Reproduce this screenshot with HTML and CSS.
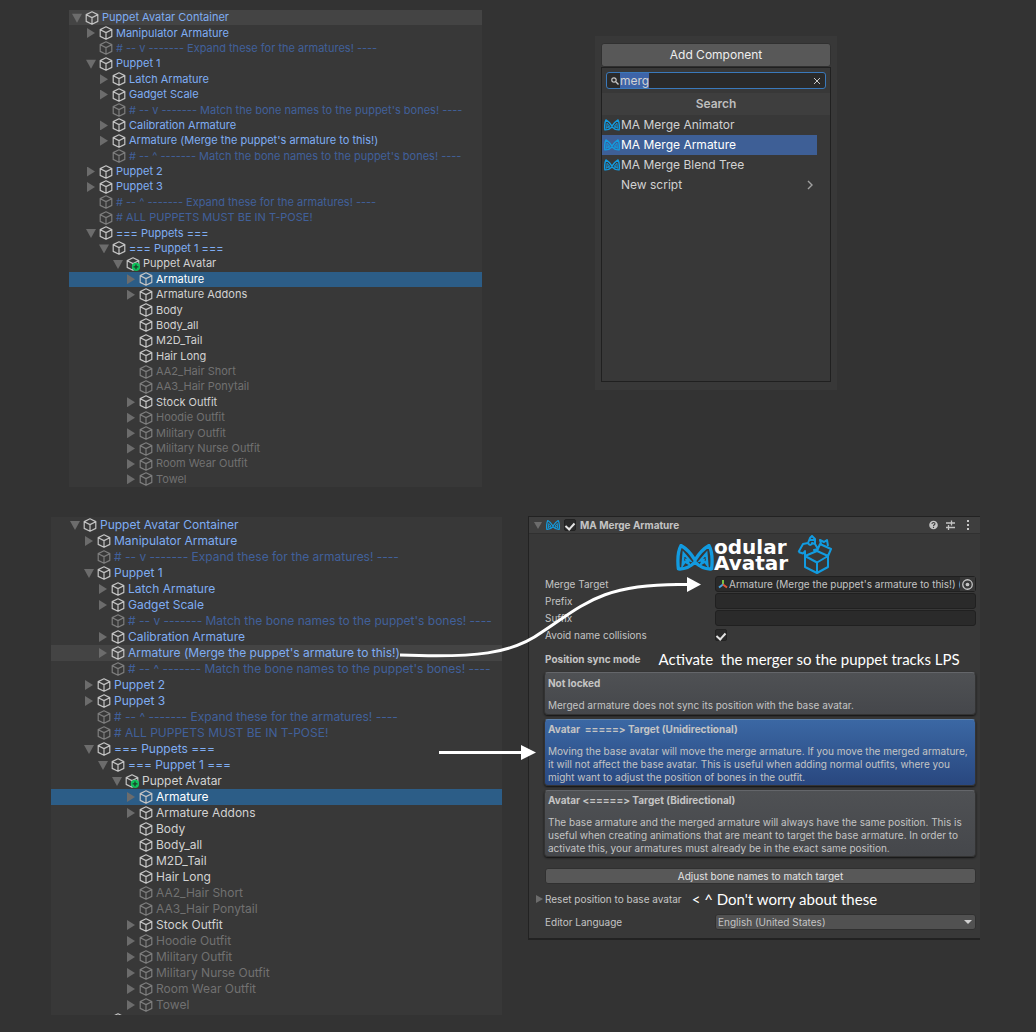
FILE: index.html
```html
<!DOCTYPE html>
<html lang="en">
<head>
<meta charset="utf-8">
<title>Puppet armature setup</title>
<link rel="stylesheet" href="styles.css">
</head>
<body>
<svg class="symbols" aria-hidden="true">
  <symbol id="cube" viewBox="0 0 14 14"><path d="M7 .8 12.8 3.6V10.4L7 13.3 1.2 10.4V3.6ZM1.2 3.8 7 6.6 12.8 3.8M7 6.6V13.2" fill="none" stroke="currentColor" stroke-width="1.2" stroke-linejoin="round"/></symbol>
  <symbol id="cube-added" viewBox="0 0 14 14"><path d="M7 .8 12.8 3.6V10.4L7 13.3 1.2 10.4V3.6ZM1.2 3.8 7 6.6 12.8 3.8M7 6.6V13.2" fill="none" stroke="currentColor" stroke-width="1.2" stroke-linejoin="round"/><circle cx="10" cy="9.800" r="4.100" fill="#0fc25b"/><path d="M10 7.400V12.200M7.600 9.800H12.400" stroke="#1c3a28" stroke-width="1.300"/></symbol>
  <symbol id="ears" viewBox="0 0 36 26"><path d="M2 24C1 15 1.500 7 4.500 1.500 9 4 14 9 18 15.500 22 9 27 4 31.500 1.500 34.500 7 35 15 34 24 27 24.500 22 21.500 18 17.500 14 21.500 9 24.500 2 24Z" fill="none" stroke="#129be0" stroke-width="3.200" stroke-linejoin="round"/><path d="M6 20.500 7 9 13 16 10 15.500 12 19 8.500 17ZM30 20.500 29 9 23 16 26 15.500 24 19 27.500 17Z" fill="none" stroke="#129be0" stroke-width="2.200"/></symbol>
</svg>
<main>
  <section class="step step-pick">
    <ul class="tree tree-compact">
      <li class="open prefab hover"><svg><use href="#cube"/></svg>Puppet Avatar Container</li>
      <li class="l1 closed prefab"><svg><use href="#cube"/></svg>Manipulator Armature</li>
      <li class="l1 prefab off"><svg><use href="#cube"/></svg># -- v ------- Expand these for the armatures! ----</li>
      <li class="l1 open prefab"><svg><use href="#cube"/></svg>Puppet 1</li>
      <li class="l2 closed prefab"><svg><use href="#cube"/></svg>Latch Armature</li>
      <li class="l2 closed prefab"><svg><use href="#cube"/></svg>Gadget Scale</li>
      <li class="l2 prefab off"><svg><use href="#cube"/></svg># -- v ------- Match the bone names to the puppet's bones! ----</li>
      <li class="l2 closed prefab"><svg><use href="#cube"/></svg>Calibration Armature</li>
      <li class="l2 closed prefab"><svg><use href="#cube"/></svg>Armature (Merge the puppet's armature to this!)</li>
      <li class="l2 prefab off"><svg><use href="#cube"/></svg># -- ^ ------- Match the bone names to the puppet's bones! ----</li>
      <li class="l1 closed prefab"><svg><use href="#cube"/></svg>Puppet 2</li>
      <li class="l1 closed prefab"><svg><use href="#cube"/></svg>Puppet 3</li>
      <li class="l1 prefab off"><svg><use href="#cube"/></svg># -- ^ ------- Expand these for the armatures! ----</li>
      <li class="l1 prefab off"><svg><use href="#cube"/></svg># ALL PUPPETS MUST BE IN T-POSE!</li>
      <li class="l1 open prefab"><svg><use href="#cube"/></svg>=== Puppets ===</li>
      <li class="l2 open prefab"><svg><use href="#cube"/></svg>=== Puppet 1 ===</li>
      <li class="l3 open"><svg><use href="#cube-added"/></svg>Puppet Avatar</li>
      <li class="l4 closed selected"><svg><use href="#cube"/></svg>Armature</li>
      <li class="l4 closed"><svg><use href="#cube"/></svg>Armature Addons</li>
      <li class="l4"><svg><use href="#cube"/></svg>Body</li>
      <li class="l4"><svg><use href="#cube"/></svg>Body_all</li>
      <li class="l4"><svg><use href="#cube"/></svg>M2D_Tail</li>
      <li class="l4"><svg><use href="#cube"/></svg>Hair Long</li>
      <li class="l4 off"><svg><use href="#cube"/></svg>AA2_Hair Short</li>
      <li class="l4 off"><svg><use href="#cube"/></svg>AA3_Hair Ponytail</li>
      <li class="l4 closed"><svg><use href="#cube"/></svg>Stock Outfit</li>
      <li class="l4 closed off"><svg><use href="#cube"/></svg>Hoodie Outfit</li>
      <li class="l4 closed off"><svg><use href="#cube"/></svg>Military Outfit</li>
      <li class="l4 closed off"><svg><use href="#cube"/></svg>Military Nurse Outfit</li>
      <li class="l4 closed off"><svg><use href="#cube"/></svg>Room Wear Outfit</li>
      <li class="l4 closed off"><svg><use href="#cube"/></svg>Towel</li>
    </ul>
    <div class="picker">
      <button type="button" class="picker-open">Add Component</button>
      <div class="picker-menu">
        <label class="search">
          <svg class="lens" viewBox="0 0 8 8"><circle cx="3" cy="3" r="2.200" fill="none" stroke="#c8c8c8" stroke-width="1.200"/><path d="M4.800 4.800 7.500 7.500" stroke="#c8c8c8" stroke-width="1.400"/></svg>
          <input type="text" id="component-search" aria-label="Search components" value="merg" autofocus>
          <svg class="clear" viewBox="0 0 8 8"><path d="M1 1 7 7M7 1 1 7" stroke="#c8c8c8"/></svg>
        </label>
        <h2>Search</h2>
        <ul class="results">
          <li><button type="button"><svg><use href="#ears"/></svg>MA Merge Animator</button></li>
          <li><button type="button" class="current"><svg><use href="#ears"/></svg>MA Merge Armature</button></li>
          <li><button type="button"><svg><use href="#ears"/></svg>MA Merge Blend Tree</button></li>
          <li><button type="button" class="more">New script<svg viewBox="0 0 8 10"><path d="M2 1 6 5 2 9" fill="none" stroke="#a0a0a0" stroke-width="1.400"/></svg></button></li>
        </ul>
      </div>
    </div>
  </section>

  <section class="step step-link">
    <ul class="tree">
      <li class="open prefab"><svg><use href="#cube"/></svg>Puppet Avatar Container</li>
      <li class="l1 closed prefab"><svg><use href="#cube"/></svg>Manipulator Armature</li>
      <li class="l1 prefab off"><svg><use href="#cube"/></svg># -- v ------- Expand these for the armatures! ----</li>
      <li class="l1 open prefab"><svg><use href="#cube"/></svg>Puppet 1</li>
      <li class="l2 closed prefab"><svg><use href="#cube"/></svg>Latch Armature</li>
      <li class="l2 closed prefab"><svg><use href="#cube"/></svg>Gadget Scale</li>
      <li class="l2 prefab off"><svg><use href="#cube"/></svg># -- v ------- Match the bone names to the puppet's bones! ----</li>
      <li class="l2 closed prefab"><svg><use href="#cube"/></svg>Calibration Armature</li>
      <li class="l2 closed prefab hover"><svg><use href="#cube"/></svg>Armature (Merge the puppet's armature to this!)</li>
      <li class="l2 prefab off"><svg><use href="#cube"/></svg># -- ^ ------- Match the bone names to the puppet's bones! ----</li>
      <li class="l1 closed prefab"><svg><use href="#cube"/></svg>Puppet 2</li>
      <li class="l1 closed prefab"><svg><use href="#cube"/></svg>Puppet 3</li>
      <li class="l1 prefab off"><svg><use href="#cube"/></svg># -- ^ ------- Expand these for the armatures! ----</li>
      <li class="l1 prefab off"><svg><use href="#cube"/></svg># ALL PUPPETS MUST BE IN T-POSE!</li>
      <li class="l1 open prefab"><svg><use href="#cube"/></svg>=== Puppets ===</li>
      <li class="l2 open prefab"><svg><use href="#cube"/></svg>=== Puppet 1 ===</li>
      <li class="l3 open"><svg><use href="#cube-added"/></svg>Puppet Avatar</li>
      <li class="l4 closed selected"><svg><use href="#cube"/></svg>Armature</li>
      <li class="l4 closed"><svg><use href="#cube"/></svg>Armature Addons</li>
      <li class="l4"><svg><use href="#cube"/></svg>Body</li>
      <li class="l4"><svg><use href="#cube"/></svg>Body_all</li>
      <li class="l4"><svg><use href="#cube"/></svg>M2D_Tail</li>
      <li class="l4"><svg><use href="#cube"/></svg>Hair Long</li>
      <li class="l4 off"><svg><use href="#cube"/></svg>AA2_Hair Short</li>
      <li class="l4 off"><svg><use href="#cube"/></svg>AA3_Hair Ponytail</li>
      <li class="l4 closed"><svg><use href="#cube"/></svg>Stock Outfit</li>
      <li class="l4 closed off"><svg><use href="#cube"/></svg>Hoodie Outfit</li>
      <li class="l4 closed off"><svg><use href="#cube"/></svg>Military Outfit</li>
      <li class="l4 closed off"><svg><use href="#cube"/></svg>Military Nurse Outfit</li>
      <li class="l4 closed off"><svg><use href="#cube"/></svg>Room Wear Outfit</li>
      <li class="l4 closed off"><svg><use href="#cube"/></svg>Towel</li>
      <li class="l2 cut" aria-hidden="true"><svg><use href="#cube"/></svg></li>
    </ul>

    <form class="inspector">
      <header>
        <span class="fold fold-open"></span>
        <svg class="ears"><use href="#ears"/></svg>
        <input type="checkbox" id="enabled" checked>
        <label for="enabled">MA Merge Armature</label>
        <svg class="tools" viewBox="0 0 44 12"><circle cx="5.500" cy="6" r="4.300" fill="#c4c4c4"/><path d="M4 4.900C4 3 7 3.200 7 4.800 7 5.800 5.500 5.800 5.500 7M5.500 7.800V8.900" stroke="#3c3c3c" stroke-width="1.100" fill="none"/><path d="M18 4H27M23.500 1.500V6.500M18 8.500H27M20.500 6V11" stroke="#c4c4c4" stroke-width="1.300"/><path d="M40 1V3M40 5V7M40 9V11" stroke="#c4c4c4" stroke-width="2"/></svg>
      </header>
      <div class="fields">
        <div class="brand">
          <svg class="brand-ears"><use href="#ears"/></svg>
          <span class="brand-name"><span>odular</span><span>Avatar</span></span>
          <svg class="brand-box" viewBox="0 0 36 40"><path d="M8 21 20 27.500 31 21V32L20 38 8 32ZM20 27.500V38M8 21 20 16 31 21M1.500 17 6 9 11 8C12.500 11 15 10 15 8L18 9 21 14 17 15 19 17M1.500 17 6 18.500 8 16V21M20 16 23 9 34 14 31 21M24 9 23 5 27 7 30 5 31 11M11 8 13 3 15 1 18 4 18 9M13 5H17" fill="none" stroke="#129be0" stroke-width="2" stroke-linejoin="round"/></svg>
        </div>
        <div class="grid">
          <label for="target">Merge Target</label>
          <span class="object">
            <svg viewBox="0 0 10 10"><path d="M5 5.500V1" stroke="#7bc043" stroke-width="2"/><path d="M5 5.500 1 8.500" stroke="#4aa3e0" stroke-width="2"/><path d="M5 5.500 9 8.500" stroke="#e0583a" stroke-width="2"/></svg>
            <input type="text" id="target" readonly value="Armature (Merge the puppet's armature to this!) (">
            <button type="button" aria-label="Select object"><svg viewBox="0 0 12 12"><circle cx="6" cy="6" r="4.400" fill="none" stroke="#c4c4c4" stroke-width="1.200"/><circle cx="6" cy="6" r="1.700" fill="#c4c4c4"/></svg></button>
          </span>
          <label for="prefix">Prefix</label><input type="text" id="prefix">
          <label for="suffix">Suffix</label><input type="text" id="suffix">
          <label for="avoid">Avoid name collisions</label><input type="checkbox" id="avoid" checked>
        </div>
        <div class="noted sync"><strong>Position sync mode</strong><span class="note">Activate &nbsp;the merger so the puppet tracks LPS</span></div>
        <div class="modes">
          <button type="button"><strong>Not locked</strong>Merged armature does not sync its position with the base avatar.</button>
          <button type="button" class="current"><strong>Avatar &nbsp;=====&gt; Target (Unidirectional)</strong>Moving the base avatar will move the merge armature. If you move the merged armature, it will not affect the base avatar. This is useful when adding normal outfits, where you might want to adjust the position of bones in the outfit.</button>
          <button type="button"><strong>Avatar &lt;=====&gt; Target (Bidirectional)</strong>The base armature and the merged armature will always have the same position. This is useful when creating animations that are meant to target the base armature. In order to activate this, your armatures must already be in the exact same position.</button>
        </div>
        <button type="button" class="adjust">Adjust bone names to match target</button>
        <div class="noted reset"><span class="fold"></span><span>Reset position to base avatar</span><span class="note">&lt; ^ Don't worry about these</span></div>
        <div class="grid">
          <label for="language">Editor Language</label>
          <span class="dropdown"><select id="language"><option>English (United States)</option></select></span>
        </div>
      </div>
    </form>
    <svg class="arrows" viewBox="0 0 310 200" aria-hidden="true">
      <path d="M10 85C85 88 122 84 152 62C192 36 210 14 291 14.500" fill="none" stroke="#fff" stroke-width="3"/>
      <path d="M297 7 311 14.500 297 22Z" fill="#fff"/>
      <path d="M285 14.500H300M49 182.500H134" stroke="#fff" stroke-width="3"/>
      <path d="M131 175 146 182.500 131 190Z" fill="#fff"/>
    </svg>
  </section>
</main>
<script src="search.js"></script>
</body>
</html>
```
FILE: styles.css
```css
* { box-sizing: border-box; }
body {
  margin: 0;
  background: #333;
  color: #d2d2d2;
  font: 12px/16px Inter, "Liberation Sans", sans-serif;
  font-feature-settings: "calt" 0;
}
button, input, select { font: inherit; font-feature-settings: inherit; color: inherit; margin: 0; }
ul { list-style: none; margin: 0; padding: 0; }
.symbols { position: absolute; width: 0; height: 0; }

.step { display: grid; align-items: start; }
.step-pick {
  grid-template-columns: minmax(0, 413fr) minmax(0, 242fr);
  column-gap: 113px;
  padding: 10px 199px 0 69px;
}
.step-link {
  position: relative;
  grid-template-columns: minmax(0, 451fr) minmax(0, 452fr);
  column-gap: 26px;
  padding: 29px 56px 17px 51px;
}

/* Hierarchy */
.tree { background: #383838; --base: 19px; white-space: nowrap; }
.step-link .tree { margin-top: 1px; }
.tree li {
  display: flex;
  align-items: center;
  min-height: 16px;
  padding-left: calc(var(--base) + var(--indent, 0px));
}
.tree li::before { content: ""; width: 10px; height: 10px; margin-right: 3px; flex: none; }
.tree li.open::before { background: #6c6c6c; clip-path: polygon(0 1px, 100% 1px, 50% 100%); }
.tree li.closed::before { background: #6c6c6c; clip-path: polygon(1px 0, 9px 50%, 1px 100%); }
.tree svg { width: 14px; height: 14px; margin-right: 3px; flex: none; color: #c4c4c4; }
.l1 { --indent: 14px; }
.l2 { --indent: 28px; }
.l3 { --indent: 42px; }
.l4 { --indent: 56px; }
.tree-compact {
  display: grid;
  grid-auto-rows: 1fr;
  min-height: 477px;
  font-size: 11px;
  line-height: 15px;
  --base: 3px;
}
.tree-compact li { min-height: 15px; }
.tree-compact .l2 { --indent: 27px; }
.tree-compact .l3 { --indent: 41px; }
.tree-compact .l4 { --indent: 54px; }
.prefab { color: #7fadf3; }
.off { color: #717171; }
.tree .off svg { color: #7d7d7d; }
.prefab.off { color: #41609b; }
.hover { background: #444; }
.selected { background: #2c5d87; color: #fff; }
.tree .cut { min-height: 2px; height: 2px; align-items: flex-start; overflow: hidden; }

/* Add Component picker */
.picker { margin-top: 26px; padding: 7px 6px 8px; background: #383838; }
.picker-open {
  display: block;
  width: 100%;
  height: 24px;
  border: 1px solid #303030;
  border-radius: 3px;
  background: #585858;
  color: #eee;
}
.picker-menu { min-height: 315px; border: 1px solid #202020; background: #383838; }
.search {
  display: flex;
  align-items: center;
  height: 17px;
  margin: 4px;
  padding: 0 4px;
  border: 1px solid #3a79bb;
  border-radius: 3px;
  background: #2a2a2a;
}
.search svg { width: 8px; height: 8px; flex: none; }
.search input {
  flex: 1;
  min-width: 0;
  height: 15px;
  margin-left: 1px;
  padding: 0;
  border: 0;
  outline: 0;
  background: none;
}
.search input::selection { background: #3d64a8; color: #d2d2d2; }
.picker h2 { margin: 0; background: #3e3e3e; color: #bdbdbd; font: 600 12px/22px Inter, sans-serif; text-align: center; }
.results button {
  display: flex;
  align-items: center;
  gap: 1px;
  width: calc(100% - 13px);
  height: 20px;
  padding: 0 3px 0 2px;
  border: 0;
  background: none;
  text-align: left;
}
.results svg { width: 16px; height: 12px; flex: none; }
.results .current { background: #3e5f96; color: #fff; }
.results .more { justify-content: space-between; padding-left: 19px; }
.results .more svg { width: 8px; height: 10px; }

/* Component inspector */
.inspector {
  border: 1px solid #222;
  border-width: 1px 0 2px 1px;
  background: #383838;
  color: #c4c4c4;
  font-size: 10px;
  line-height: 13px;
}
.inspector header {
  display: flex;
  align-items: center;
  gap: 4px;
  height: 17px;
  padding: 0 8px 0 5px;
  border-bottom: 1px solid #303030;
  background: #3e3e3e;
  font-weight: 700;
}
.inspector header label { flex: 1; }
.fold { width: 8px; height: 8px; flex: none; background: #6c6c6c; clip-path: polygon(0 0, 7px 50%, 0 100%); }
.fold-open { clip-path: polygon(0 1px, 100% 1px, 50% 100%); }
.ears { width: 14px; height: 12px; }
.tools { width: 44px; height: 12px; }
input[type="checkbox"] {
  appearance: none;
  display: flex;
  justify-content: center;
  width: 12px;
  height: 12px;
  border: 1px solid #222;
  border-radius: 2px;
  background: #2a2a2a;
}
input[type="checkbox"]:checked::after {
  content: "";
  width: 4px;
  height: 7px;
  margin-top: 1px;
  border: solid #e4e4e4;
  border-width: 0 2px 2px 0;
  transform: rotate(42deg);
}
.fields { padding: 0 4px 8px 16px; }
.brand { display: flex; align-items: center; justify-content: center; height: 42px; padding-right: 12px; }
.brand-ears { width: 38px; height: 27px; margin-top: 4px; }
.brand-name { width: 83px; color: #fff; font: bold 20px/16px "DejaVu Sans", sans-serif; }
.brand-name span { display: block; }
.brand-box { width: 36px; height: 40px; }
.grid { display: grid; grid-template-columns: 170px 1fr; row-gap: 1px; align-items: center; }
.grid label { line-height: 16px; }
.grid > input[type="text"], .object {
  display: flex;
  align-items: center;
  min-width: 0;
  width: 100%;
  height: 16px;
  border: 1px solid #202020;
  border-radius: 3px;
  background: #2a2a2a;
}
.object svg { width: 10px; height: 10px; margin: 0 1px 0 2px; flex: none; }
.object input { flex: 1; min-width: 0; padding: 0; border: 0; background: none; }
.object button { height: 14px; padding: 0 1px; border: 0; background: #373737; }
.object button svg { display: block; width: 13px; height: 13px; margin: 0; }
.noted { display: flex; align-items: center; gap: 18px; height: 29px; white-space: nowrap; }
.sync { padding-top: 3px; }
.note { color: #fff; font: 15px/20px Lato, sans-serif; }
.modes { display: grid; gap: 4px; margin-left: -1px; }
.modes button {
  display: block;
  width: 100%;
  min-height: 43px;
  padding: 3px 3px 1px;
  border: 1px solid #333;
  border-top-color: #64666a;
  border-radius: 4px;
  background: linear-gradient(#4f5154, #45474b);
  box-shadow: 0 1px 2px #111;
  text-align: left;
}
.modes strong { display: block; margin-bottom: 9px; }
.modes .current { border-top-color: #5d81ab; background: linear-gradient(#3b68a4, #29477f); }
.adjust {
  display: block;
  width: 100%;
  height: 16px;
  margin-top: 11px;
  padding: 0;
  border: 1px solid #303030;
  border-radius: 3px;
  background: #585858;
  color: #e4e4e4;
}
.reset { gap: 10px; height: 30px; margin-left: -9px; }
.reset .fold { margin-right: -9px; }
.dropdown { position: relative; display: grid; }
.dropdown::after {
  content: "";
  position: absolute;
  right: 4px;
  top: 6px;
  width: 8px;
  height: 4px;
  background: #d0d0d0;
  clip-path: polygon(0 0, 100% 0, 50% 100%);
  pointer-events: none;
}
select {
  appearance: none;
  height: 16px;
  padding: 0 2px;
  border: 1px solid #303030;
  border-radius: 3px;
  background: #515151;
}

/* Pointers drawn over the hierarchy and the inspector */
.arrows { position: absolute; left: 390px; top: 83px; width: 310px; height: 200px; pointer-events: none; overflow: visible; }
```
FILE: search.js
```js
document.getElementById("component-search").select();
```
